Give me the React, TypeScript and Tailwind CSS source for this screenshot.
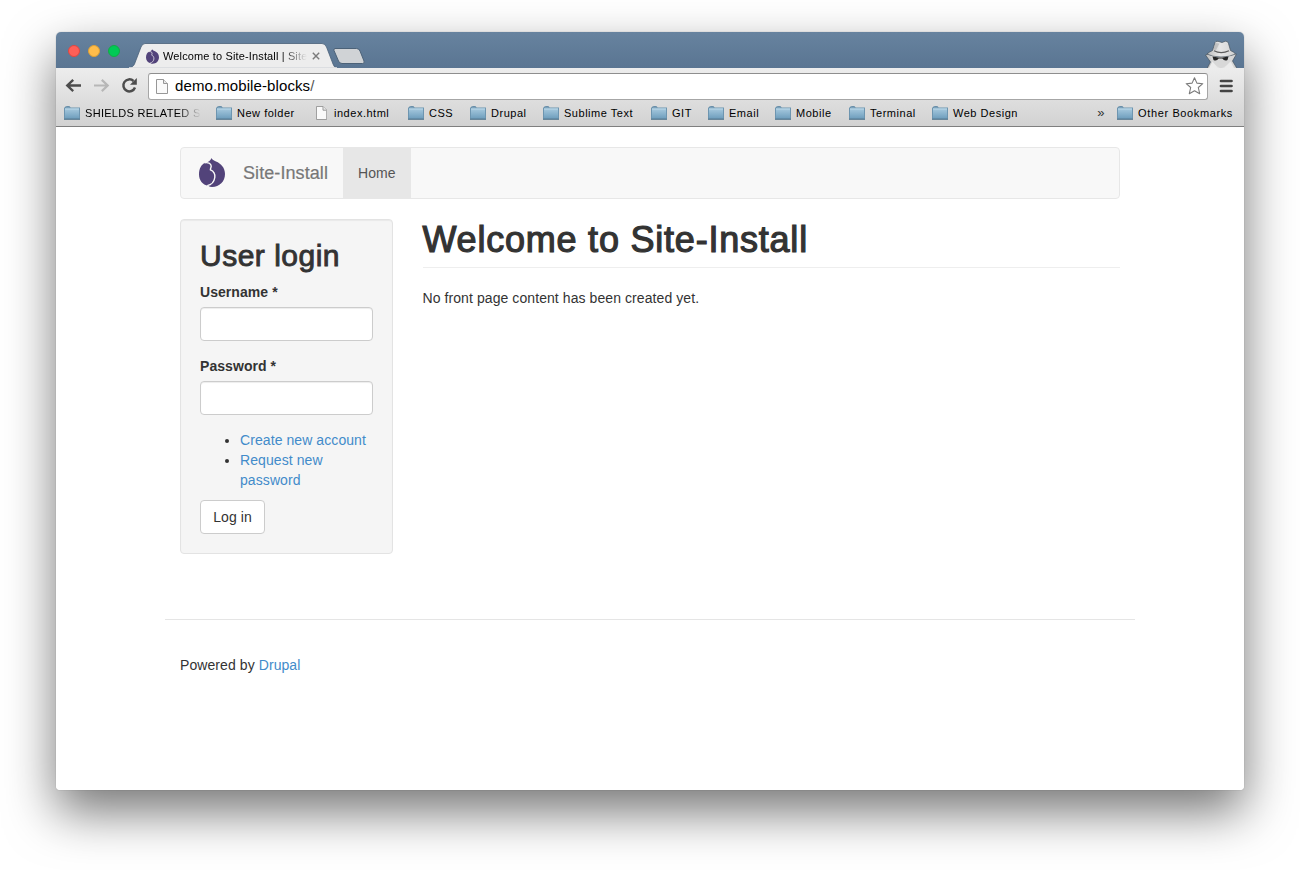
import React from "react";

function FolderIcon() {
  return (
    <svg width="16" height="15" viewBox="0 0 16 15" className="shrink-0">
      <defs>
        <linearGradient id="folder" x1="0" y1="0" x2="0" y2="1">
          <stop offset="0" stopColor="#a9cbe0" />
          <stop offset="1" stopColor="#6c9cbb" />
        </linearGradient>
      </defs>
      <path d="M1.500 2.500V1Q1.500 .5 2.500 .5H5Q6 .5 6 1.500V2.500" fill="#88adc6" stroke="#6b8fa8" />
      <rect x=".5" y="2" width="15" height="11" fill="url(#folder)" stroke="#6d95b0" />
      <path d="M1 3H15" stroke="#bcd8e8" />
      <path d="M0 13.200H16" stroke="#4f7289" />
    </svg>
  );
}

function PageIcon({ size = 14 }: { size?: number }) {
  return (
    <svg width={size * 0.8} height={size} viewBox="0 0 12 15" className="shrink-0">
      <path d="M.5 .5H7.500L11.500 4.500V14.500H.5Z" fill="#fafafa" stroke="#979797" />
      <path d="M7.500 .5V4.500H11.500" fill="#e8e8e8" stroke="#979797" />
    </svg>
  );
}

function FigLogo({ className }: { className: string }) {
  return (
    <svg viewBox="0 0 26 29" className={className}>
      <path
        d="M12.200 0C13 1.600 15 2.500 17 3.600C22 5.500 26 10 26 16C26 23.500 20.500 29 13 29C11.500 29 10.200 28.600 9.200 27.800C3.500 27 0 22 0 16.500C0 10.500 2.500 6.500 6 4.800C9 4.300 12 2.500 12.200 0Z"
        fill="#52437a"
      />
      <path
        d="M5.500 4.800C9 4.200 12 5.200 12.200 8C12.200 9.600 11.300 10.500 11.400 11.800C14.500 13 16.200 16 15.800 19.500C15.200 23.500 12.500 26.800 8.200 27.600"
        fill="none"
        stroke="#f8f8f8"
        strokeWidth="1.400"
      />
    </svg>
  );
}

function Incognito() {
  return (
    <svg width="34" height="28" viewBox="0 0 34 28">
      <defs>
        <linearGradient id="coat" x1="0" y1="0" x2="1" y2="0">
          <stop offset="0" stopColor="#bdbdbd" />
          <stop offset=".45" stopColor="#e6e6e6" />
          <stop offset="1" stopColor="#d2d2d2" />
        </linearGradient>
      </defs>
      <g stroke="#46535f" strokeWidth=".7" strokeLinejoin="round">
        <path d="M3 28.500L6.500 22L1.500 15L5 13.500H28L32.500 14L28.500 21L33 28.500Z" fill="url(#coat)" />
        <path
          d="M8.500 10.500L11 2.500Q11.500 1 14 1.300L18 2.500L21.500 1.200Q24 1 24.500 3.500L26.500 10.500Q30 12 31.500 14Q26 17 17 17Q8 17 3 14Q5 12 8.500 10.500Z"
          fill="url(#coat)"
        />
      </g>
      <path d="M11.500 3L15.500 3.500L12 10L9.500 9.500Z" fill="#a5a5a5" opacity=".5" />
      <path d="M10 10.800Q17 14.500 25 10.800" fill="none" stroke="#5c5c5c" strokeWidth="1.100" />
      <path d="M6.500 16Q17 18.500 28 16L26.500 23L18 28H16L8 23Z" fill="#d8d8d8" />
      <path d="M8.500 16.500L14.500 17.500H18.500L24.500 16.500L23.500 20Q20.500 21.500 18.300 18.600H14.700Q12.500 21.500 9.500 20Z" fill="#252525" />
      <path d="M5 28L8.500 21.500L14 28Z" fill="#ececec" />
      <path d="M20 28L26.500 21.500L30 28Z" fill="#ececec" />
    </svg>
  );
}

const bookmarks = [
  { label: "SHIELDS RELATED S", cls: "w-[152px]", fade: true },
  { label: "New folder", cls: "w-[100px]" },
  { label: "index.html", cls: "w-[92px]", page: true },
  { label: "CSS", cls: "w-[62px]" },
  { label: "Drupal", cls: "w-[73px]" },
  { label: "Sublime Text", cls: "w-[108px]" },
  { label: "GIT", cls: "w-[57px]" },
  { label: "Email", cls: "w-[67px]" },
  { label: "Mobile", cls: "w-[74px]" },
  { label: "Terminal", cls: "w-[83px]" },
  { label: "Web Design", cls: "w-[100px]" },
];

function TitleBar() {
  return (
    <div className="relative flex h-9 shrink-0 bg-linear-to-b from-[#67839f] to-[#5a7592] pl-3">
      <svg width="320" height="36" viewBox="0 0 320 36" className="absolute top-0 left-0">
        <path d="M73 36C76 35.500 77.500 34 78.500 32L85 15Q86.500 11.500 89 11.500H266Q269 11.500 270.500 15L277 32Q278 35.500 281 36Z" fill="#ededed" stroke="#4a6179" strokeWidth=".8" />
        <path d="M73 36H281" stroke="#ededed" strokeWidth="1.500" />
        <path d="M279 16.500H300.500Q303 16.500 304 19L308 29Q309 31.500 306.500 31.500H286Q283.500 31.500 282.500 29L278 18.500Q277.500 16.500 279 16.500Z" fill="#d0d3d6" stroke="#4c6278" />
      </svg>
      <div className="flex gap-2 pt-[13px]">
        <span className="size-3 rounded-full border border-[#e2463f] bg-[#ff5f57]" />
        <span className="size-3 rounded-full border border-[#e0a135] bg-[#ffbd4c]" />
        <span className="size-3 rounded-full border border-[#12ac45] bg-[#00ca56]" />
      </div>
      <div className="relative mt-[17px] ml-[26px] flex h-[14px] items-center">
        <FigLogo className="h-[15px] w-[13px]" />
        <span className="ml-1 w-[144px] mask-r-from-[82%] text-[11px] leading-[14px] tracking-[0.14px] whitespace-nowrap text-black">
          Welcome to Site-Install | Site
        </span>
        <svg width="8" height="8" viewBox="0 0 8 8" className="ml-[5px]">
          <path d="M.8 .8L7.200 7.200M7.200 .8L.8 7.200" stroke="#7a7a7a" strokeWidth="1.400" />
        </svg>
      </div>
      <div className="ml-auto flex items-end pr-[6px]">
        <Incognito />
      </div>
    </div>
  );
}

function Toolbar() {
  return (
    <div className="h-[59px] shrink-0 border-b border-[#7f7f7f] bg-linear-to-b from-[#ededed] to-[#d2d2d2]">
      <div className="flex h-9 items-center pl-[9px]">
        <svg width="76" height="20" viewBox="0 0 76 20" fill="none">
          <path d="M16 9.500H2.500M8.200 3.900L2.300 9.500L8.200 15.100" stroke="#4d4d4d" strokeWidth="2.400" />
          <path d="M29 9.500H42.500M36.800 3.900L42.700 9.500L36.800 15.100" stroke="#b7b7b7" strokeWidth="2.200" />
          <path d="M68.500 5A6 6 0 1 0 70 11.500" stroke="#4d4d4d" strokeWidth="2.500" />
          <path d="M71.800 2V8.800H65Z" fill="#4d4d4d" />
        </svg>
        <div className="ml-[7px] flex h-[27px] w-[1060px] items-center rounded-[3px] border border-[#a6a6a6] border-t-[#8e8e8e] bg-white pr-[3px] pl-[7px]">
          <PageIcon size={15} />
          <span className="ml-[7px] text-[15px] tracking-[0.1px] text-black">
            demo.mobile-blocks<span className="text-[#555]">/</span>
          </span>
          <svg width="20" height="20" viewBox="0 0 20 20" className="ml-auto">
            <path d="M10.500 1.700L12.900 7.100L18.800 7.700L14.300 11.500L15.700 17.700L10.500 14.700L5.300 17.700L6.700 11.500L2.200 7.700L8.100 7.100Z" fill="#fff" stroke="#7b7b7b" strokeWidth="1.100" strokeLinejoin="round" />
          </svg>
        </div>
        <svg width="14" height="14" viewBox="0 0 14 14" className="ml-[11px]">
          <path d="M2 2H12.500M2 7H12.500M2 12H12.500" stroke="#444" strokeWidth="2.700" strokeLinecap="round" />
        </svg>
      </div>
      <div className="flex h-[18px] items-center pl-2 text-[11px] tracking-[0.52px] text-black">
        {bookmarks.map((b) => (
          <div key={b.label} className={"flex shrink-0 items-center " + b.cls}>
            <span className={"flex shrink-0 " + (b.page ? "w-[18px]" : "w-[21px]")}>{b.page ? <PageIcon size={14} /> : <FolderIcon />}</span>
            <span className={"whitespace-nowrap " + (b.fade ? "mask-r-from-[80%] tracking-[0.3px]" : "")}>{b.label}</span>
          </div>
        ))}
        <span className="ml-auto text-[13px] text-[#333]">»</span>
        <div className="ml-[12px] flex items-center gap-[5px] pr-[11px]">
          <FolderIcon />
          <span className="tracking-[0.62px]">Other Bookmarks</span>
        </div>
      </div>
    </div>
  );
}

function Field({ label }: { label: string }) {
  return (
    <label className="mb-[15px] block">
      <span className="mb-[5px] block font-bold tracking-[0.06px]">{label} *</span>
      <input className="block h-[34px] w-full rounded border border-[#ccc] bg-white px-3 shadow-[inset_0_1px_1px_rgba(0,0,0,0.075)]" />
    </label>
  );
}

function Site() {
  return (
    <div className="flex-1 bg-white px-[109px] pt-5 text-[14px] leading-5 tracking-[0.08px] text-[#333]">
      <nav className="mx-[15px] flex h-[52px] rounded border border-[#e7e7e7] bg-[#f8f8f8]">
        <FigLogo className="mt-[10px] ml-[18px] h-[29px] w-[26px]" />
        <span className="ml-[18px] w-[100px] pt-[15px] text-[18px] tracking-[0.08px] text-[#777] [-webkit-text-stroke:0.2px_#777]">Site-Install</span>
        <span className="w-[68px] bg-[#e7e7e7] pt-[15px] pl-[15px] tracking-[0.1px] text-[#555]">Home</span>
      </nav>
      <div className="mx-[15px] mt-5 flex items-start">
        <aside className="h-[335px] w-[213px] rounded border border-[#e3e3e3] bg-[#f5f5f5] p-[19px] shadow-[inset_0_1px_1px_rgba(0,0,0,0.05)]">
          <h2 className="mb-[10px] text-[30px] leading-[33px] tracking-[0.5px] [-webkit-text-stroke:0.9px_#333]">User login</h2>
          <Field label="Username" />
          <Field label="Password" />
          <ul className="mb-[10px] list-disc pl-10 text-[#428bca] marker:text-[#333]">
            <li>Create new account</li>
            <li>Request new password</li>
          </ul>
          <button className="h-[34px] w-[65px] rounded border border-[#ccc] bg-white">Log in</button>
        </aside>
        <main className="ml-[29.500px] flex-1">
          <h1 className="h-[49px] border-b border-[#eee] pt-px text-[36px] leading-10 tracking-[0.78px] [-webkit-text-stroke:1.2px_#333]">Welcome to Site-Install</h1>
          <p className="mt-5">No front page content has been created yet.</p>
        </main>
      </div>
      <footer className="mt-[65px] border-t border-[#e5e5e5] px-[15px] pt-[35px]">
        Powered by <span className="text-[#428bca]">Drupal</span>
      </footer>
    </div>
  );
}

export default function App() {
  return (
    <div className="h-[870px] w-[1300px] overflow-hidden bg-white px-14 pt-8 font-['Liberation_Sans',Arial,sans-serif]">
      <div className="flex h-[758px] flex-col overflow-hidden rounded-t-[5px] rounded-b-[4px] shadow-[0_0_1px_rgba(0,0,0,0.4),0_22px_50px_rgba(0,0,0,0.54)]">
        <TitleBar />
        <Toolbar />
        <Site />
      </div>
    </div>
  );
}
